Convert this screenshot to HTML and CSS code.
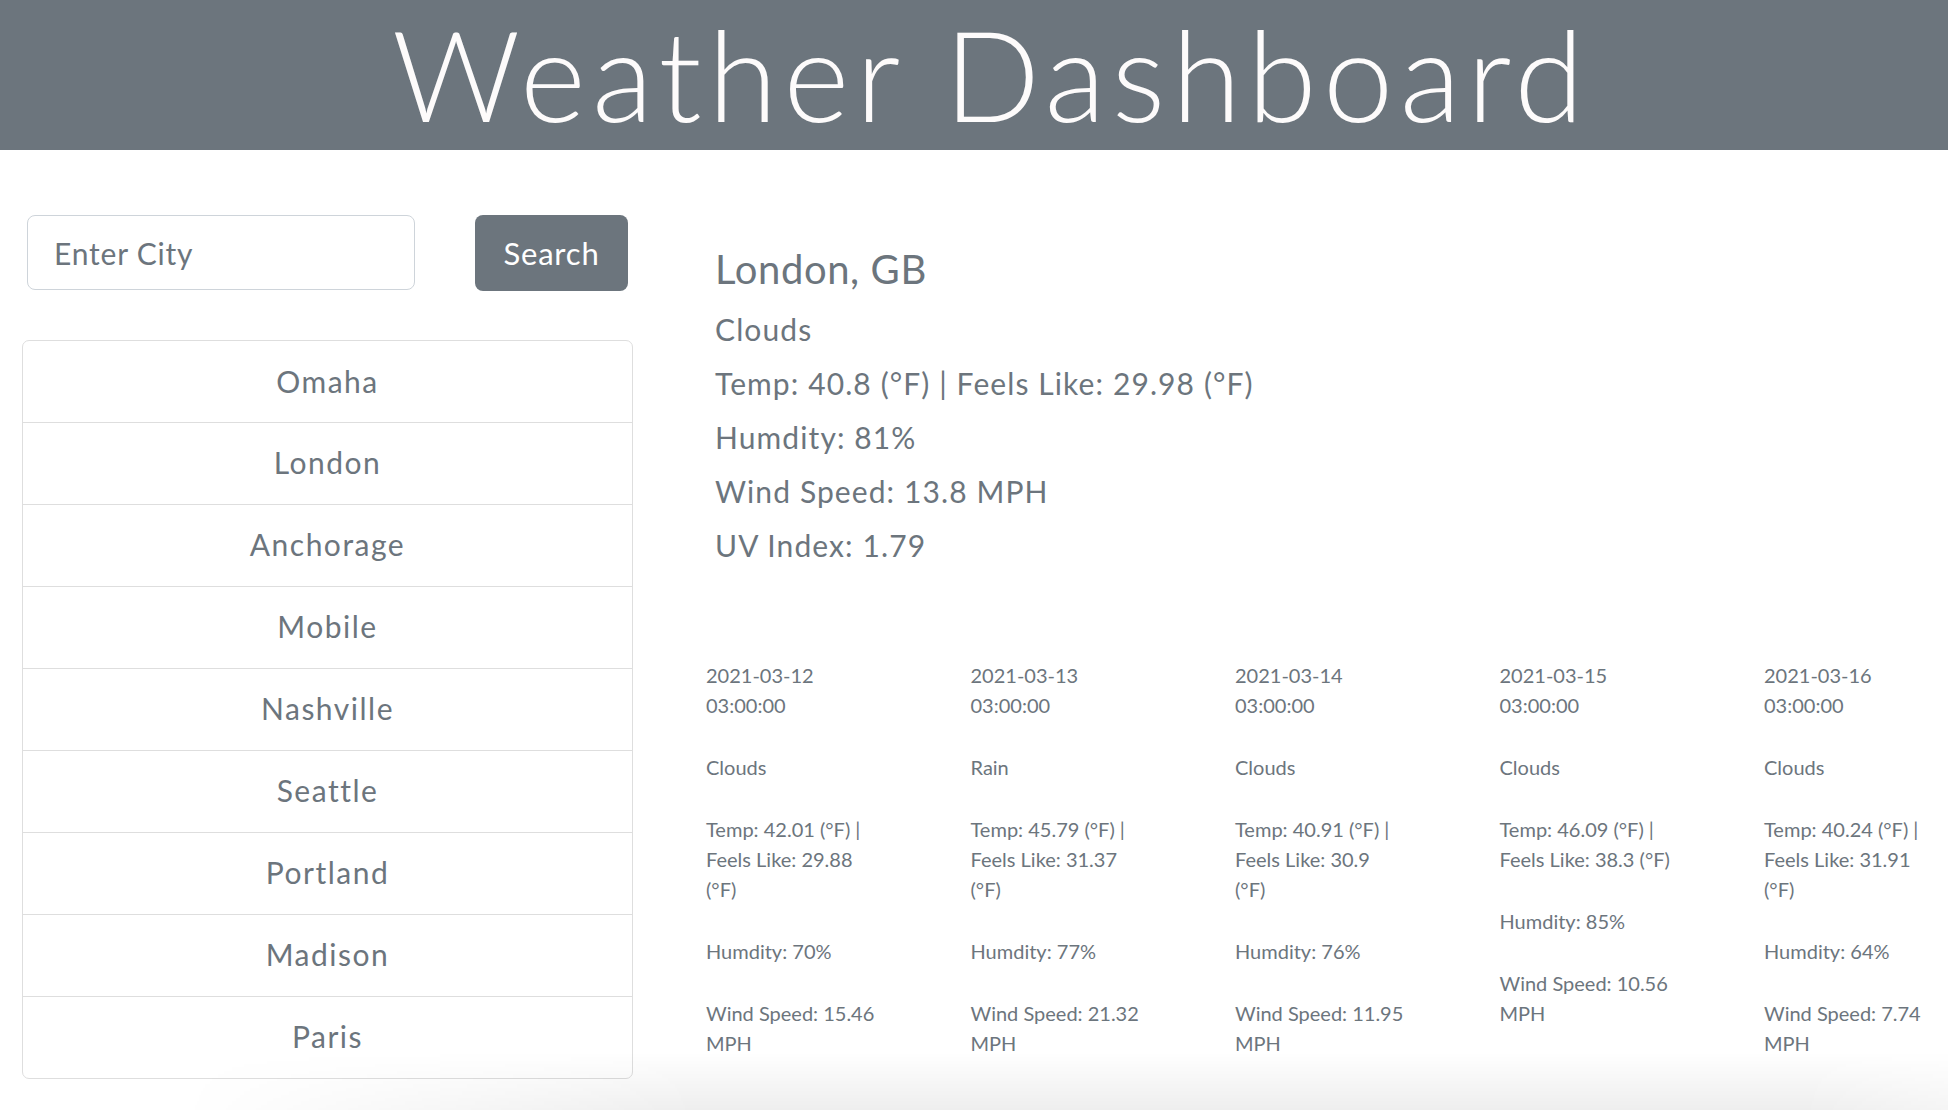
FILE: index.html
```html
<!DOCTYPE html>
<html lang="en">
<head>
<meta charset="utf-8">
<title>Weather Dashboard</title>
<link rel="stylesheet" href="styles.css">
</head>
<body>
<header class="hero">
  <h1 class="hero-title">Weather Dashboard</h1>
</header>
<main class="layout">
  <aside class="sidebar">
    <form class="search">
      <input class="search-input" type="text" placeholder="Enter City">
      <button class="search-btn" type="button">Search</button>
    </form>
    <ul class="city-list">
      <li class="city-item">Omaha</li>
      <li class="city-item">London</li>
      <li class="city-item">Anchorage</li>
      <li class="city-item">Mobile</li>
      <li class="city-item">Nashville</li>
      <li class="city-item">Seattle</li>
      <li class="city-item">Portland</li>
      <li class="city-item">Madison</li>
      <li class="city-item">Paris</li>
    </ul>
  </aside>
  <section class="weather">
    <div class="current">
      <h4 class="current-city">London, GB</h4>
      <h5 class="current-line">Clouds</h5>
      <h5 class="current-line">Temp: 40.8 (°F) | Feels Like: 29.98 (°F)</h5>
      <h5 class="current-line">Humdity: 81%</h5>
      <h5 class="current-line">Wind Speed: 13.8 MPH</h5>
      <h5 class="current-line">UV Index: 1.79</h5>
    </div>
    <div class="forecast">
      <div class="day">
        <p class="day-line">2021-03-12 03:00:00</p>
        <p class="day-line">Clouds</p>
        <p class="day-line">Temp: 42.01 (°F) | Feels Like: 29.88 (°F)</p>
        <p class="day-line">Humdity: 70%</p>
        <p class="day-line">Wind Speed:&nbsp;15.46 MPH</p>
      </div>
      <div class="day">
        <p class="day-line">2021-03-13 03:00:00</p>
        <p class="day-line">Rain</p>
        <p class="day-line">Temp: 45.79 (°F) | Feels Like: 31.37 (°F)</p>
        <p class="day-line">Humdity: 77%</p>
        <p class="day-line">Wind Speed:&nbsp;21.32 MPH</p>
      </div>
      <div class="day">
        <p class="day-line">2021-03-14 03:00:00</p>
        <p class="day-line">Clouds</p>
        <p class="day-line">Temp: 40.91 (°F) | Feels Like: 30.9<br>(°F)</p>
        <p class="day-line">Humdity: 76%</p>
        <p class="day-line">Wind Speed:&nbsp;11.95 MPH</p>
      </div>
      <div class="day">
        <p class="day-line">2021-03-15 03:00:00</p>
        <p class="day-line">Clouds</p>
        <p class="day-line">Temp: 46.09 (°F) | Feels Like: 38.3 (°F)</p>
        <p class="day-line">Humdity: 85%</p>
        <p class="day-line">Wind Speed:&nbsp;10.56 MPH</p>
      </div>
      <div class="day">
        <p class="day-line">2021-03-16 03:00:00</p>
        <p class="day-line">Clouds</p>
        <p class="day-line">Temp: 40.24 (°F) | Feels Like: 31.91 (°F)</p>
        <p class="day-line">Humdity: 64%</p>
        <p class="day-line">Wind Speed:&nbsp;7.74 MPH</p>
      </div>
    </div>
  </section>
</main>
</body>
</html>
```
FILE: styles.css
```css
* { box-sizing: border-box; }

html, body {
  margin: 0;
  padding: 0;
  height: 100%;
  overflow: hidden;
}

body {
  font-family: "Lato", "Noto Sans", "DejaVu Sans", sans-serif;
  color: #6c757d;
  background: #ffffff;
}

body::after {
  content: "";
  position: fixed;
  left: 0;
  right: 0;
  bottom: 0;
  height: 58px;
  pointer-events: none;
  background: linear-gradient(to bottom, rgba(0, 0, 0, 0), rgba(0, 0, 0, 0.065));
  -webkit-mask-image: linear-gradient(to right, transparent 180px, #000 700px, #000 1800px, rgba(0,0,0,0.6) 1948px);
  mask-image: linear-gradient(to right, transparent 180px, #000 700px, #000 1800px, rgba(0,0,0,0.6) 1948px);
}

.hero {
  background: #6c757d;
  height: 150px;
  display: flex;
  justify-content: center;
}

.hero-title {
  margin: 0;
  font-weight: 300;
  font-size: 126px;
  line-height: 148px;
  color: #fdfbfb;
  letter-spacing: 6.3px;
  padding-left: 34px;
}

.layout {
  display: flex;
  align-items: flex-start;
  padding-top: 65px;
}

.sidebar {
  margin-left: 22px;
  width: 611px;
  flex: none;
}

.search {
  display: flex;
  justify-content: space-between;
  align-items: flex-start;
  padding: 0 5px;
  margin: 0;
}

.search-input {
  width: 388px;
  height: 75px;
  border: 1.5px solid #ced4da;
  border-radius: 8px;
  padding: 0 0 0 26px;
  font-family: inherit;
  font-size: 30px;
  letter-spacing: 0.8px;
  color: #495057;
  outline: none;
}

.search-input::placeholder {
  color: #6c757d;
  opacity: 1;
}

.search-btn {
  width: 153px;
  height: 76px;
  border: none;
  border-radius: 8px;
  background: #6c757d;
  color: #ffffff;
  font-family: inherit;
  font-size: 31px;
  letter-spacing: 0.8px;
  padding: 0;
}

.city-list {
  list-style: none;
  margin: 49px 0 0;
  padding: 0;
  border: 1.5px solid #dedede;
  border-radius: 7px;
}

.city-item {
  height: 81px;
  line-height: 80px;
  text-align: center;
  font-size: 30px;
  letter-spacing: 1.5px;
  color: #6c757d;
}

.city-item + .city-item {
  height: 82px;
  border-top: 1.5px solid #dedede;
  line-height: 79px;
}

.weather {
  margin-left: 73px;
  padding-top: 30px;
  flex: 1;
  min-width: 0;
}

.current {
  padding-left: 9px;
}

.current-city {
  margin: 0 0 18px;
  font-weight: 400;
  font-size: 40px;
  line-height: 48px;
  letter-spacing: 0.6px;
}

.current-line {
  margin: 0 0 18px;
  font-weight: 400;
  font-size: 30px;
  line-height: 36px;
  letter-spacing: 1.1px;
}

.forecast {
  display: flex;
  gap: 89px;
  margin-top: 97px;
}

.day {
  width: 175.5px;
  flex: none;
}

.day-line {
  margin: 0 0 32px;
  font-size: 20px;
  line-height: 30px;
}
```
